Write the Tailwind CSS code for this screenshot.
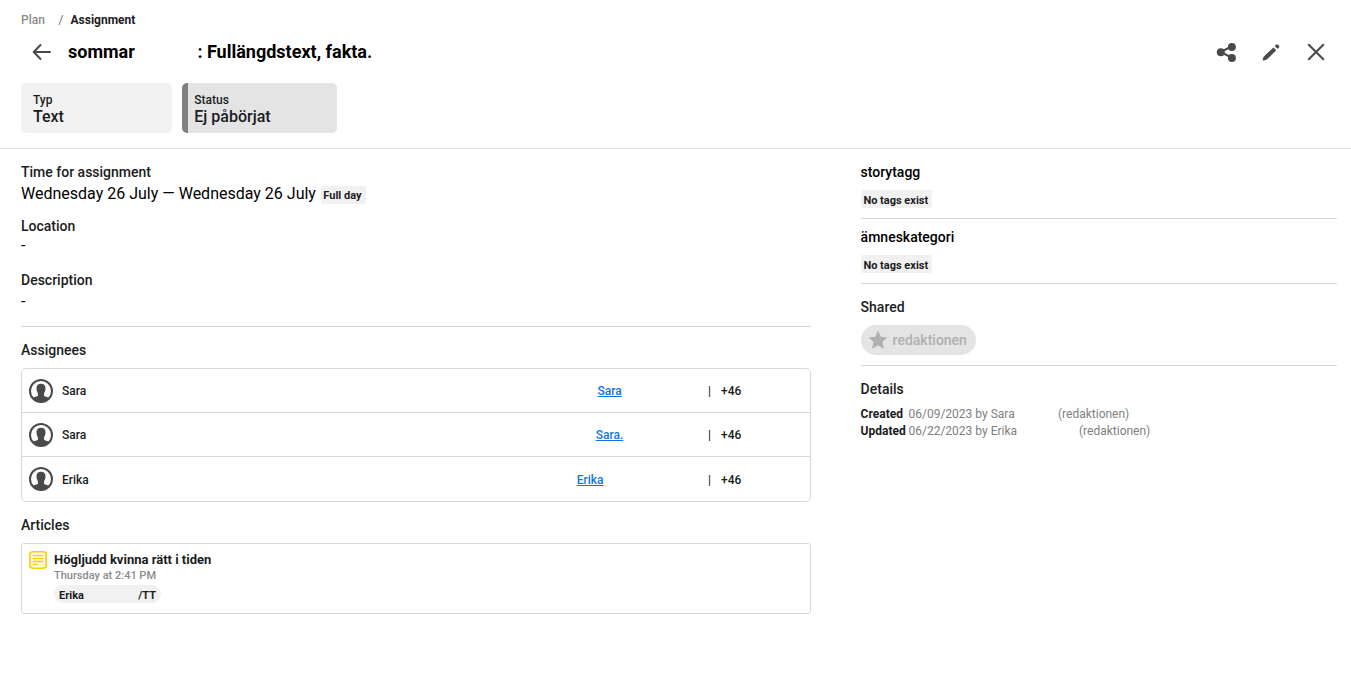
<!DOCTYPE html>
<html lang="sv">
<head>
<meta charset="utf-8">
<title>Assignment</title>
<script src="https://cdn.jsdelivr.net/npm/@tailwindcss/browser@4"></script>
</head>
<body class="h-[679px] overflow-hidden bg-white font-['Roboto',sans-serif] text-[#1b1c1d]">
<svg class="hidden">
  <symbol id="avatar" viewBox="0 0 24 24">
    <circle cx="12" cy="12" r="11" fill="#fff" stroke="#4a4a4a" stroke-width="2"/>
    <path fill="#4a4a4a" d="M12 4.800c3 0 4.700 1.900 4.500 4.800-.1 2-.6 3.600-1.400 4.500v2.600c.3.900 3.200 1.100 5.500 2.100A11 11 0 0 1 12 23a11 11 0 0 1-8.600-4.200c2.300-1 5.200-1.200 5.500-2.100v-2.600c-.8-.9-1.300-2.500-1.400-4.500C7.300 6.700 9 4.800 12 4.800z"/>
  </symbol>
</svg>

<header class="h-[149px] border-b border-[#e0e0e0] pl-[21px]">
  <nav class="flex h-[32px] items-center pt-[7px] text-[12px]">
    <span class="w-[37.500px] font-medium text-[#8b8b8b]">Plan</span>
    <span class="w-[12px] text-[#6b6b6b]">/</span>
    <span class="font-bold">Assignment</span>
  </nav>
  <div class="flex h-[40px] items-center pr-[26px]">
    <svg class="ml-[11px] h-[18px] w-[20px]" viewBox="0 0 20 18" fill="none" stroke="#4a4a4a" stroke-width="2" stroke-linecap="round" stroke-linejoin="round"><path d="M18 9H2M8.500 2L1.700 9l6.800 7"/></svg>
    <h1 class="ml-[16px] flex pb-[2px] text-[18px] font-bold text-black"><span class="w-[129.400px]">sommar</span><span>: Fullängdstext, fakta.</span></h1>
    <div class="ml-auto flex items-center">
      <svg class="h-[20px] w-[20px]" viewBox="0 0 20 20" fill="#4a4a4a"><path d="M15.500 4.500L4.500 10l11 5.500" fill="none" stroke="#4a4a4a" stroke-width="2"/><circle cx="15.900" cy="4.900" r="4"/><circle cx="4.800" cy="10.300" r="4"/><circle cx="15.900" cy="15.900" r="4"/></svg>
      <svg class="ml-[26px] h-[18px] w-[18px]" viewBox="0 0 18 18" fill="#4a4a4a"><path d="M10.900 4.900q.5-.4 1 0l1.900 1.900q.4.500 0 1L5.400 15.900Q4 17.100 1.200 17.600q-.7 0-.6-.7.500-2.500 1.800-3.800z"/><path d="M13.100 2.700l1-1q.9-.9 1.900 0l1 1q.9.900 0 1.900l-1 1q-.4.400-.8 0l-2.100-2.100q-.4-.4 0-.8z"/></svg>
      <svg class="ml-[27px] h-[18px] w-[18px]" viewBox="0 0 18 18" fill="none" stroke="#4a4a4a" stroke-width="2" stroke-linecap="round"><path d="M1.800 1.800l14.500 14.500M16.300 1.800L1.800 16.300"/></svg>
    </div>
  </div>
  <div class="mt-[11px] flex gap-[10px] font-medium">
    <div class="h-[50px] w-[151px] rounded-[5px] bg-[#f2f2f2] pl-[12px] pt-[9px]">
      <div class="text-[12px] leading-[16px]">Typ</div>
      <div class="text-[16px] leading-[18px]">Text</div>
    </div>
    <div class="h-[50px] w-[155px] rounded-[5px] border-l-[6px] border-[#808080] bg-[#e4e4e4] pl-[6.300px] pt-[9px]">
      <div class="text-[12px] leading-[16px]">Status</div>
      <div class="text-[16px] leading-[18px]">Ej påbörjat</div>
    </div>
  </div>
</header>

<main class="flex gap-[49.600px] pl-[21px]">
  <section class="w-[790px] pt-[13px]">
    <h2 class="text-[14px] font-medium leading-[20px]">Time for assignment</h2>
    <div class="flex h-[24px] items-center gap-[4.600px] text-[16px] text-black">
      <span>Wednesday 26 July — Wednesday 26 July</span>
      <span class="mt-[2px] h-[18px] w-[45px] rounded-[2px] bg-[#f1f1f1] pl-[2.800px] text-[11px] font-bold leading-[20px] text-[#1b1c1d]">Full day</span>
    </div>
    <h2 class="mt-[10px] text-[14px] font-medium leading-[20px]">Location</h2>
    <div class="h-[18px] text-[16px] leading-[20px] text-black">-</div>
    <h2 class="mt-[16px] text-[14px] font-medium leading-[20px]">Description</h2>
    <div class="mt-[2px] h-[18px] text-[16px] leading-[20px] text-black">-</div>
    <hr class="mt-[16px] border-[#d8d8d8]">
    <h2 class="mt-[13px] text-[14px] font-medium leading-[20px]">Assignees</h2>
    <ul class="mt-[8px] h-[134px] rounded-[5px] border border-[#d8d8d8] text-[12px] font-medium">
      <li class="flex h-[44px] items-center border-b border-[#d8d8d8] pl-[7px]">
        <svg class="mr-[9px] h-[24px] w-[24px]"><use href="#avatar"/></svg>
        <span class="w-[535.500px]">Sara</span><a class="w-[110.500px] text-[#0f75ea] underline">Sara</a><span class="w-[13px]">|</span><span>+46</span>
      </li>
      <li class="flex h-[44px] items-center border-b border-[#d8d8d8] pl-[7px]">
        <svg class="mr-[9px] h-[24px] w-[24px]"><use href="#avatar"/></svg>
        <span class="w-[533.700px]">Sara</span><a class="w-[112.300px] text-[#0f75ea] underline">Sara.</a><span class="w-[13px]">|</span><span>+46</span>
      </li>
      <li class="flex h-[44px] items-center pl-[7px]">
        <svg class="mr-[9px] h-[24px] w-[24px]"><use href="#avatar"/></svg>
        <span class="w-[514.700px] pt-px">Erika</span><a class="w-[131.300px] pt-px text-[#0f75ea] underline">Erika</a><span class="w-[13px] pt-px">|</span><span class="pt-px">+46</span>
      </li>
    </ul>
    <h2 class="mt-[13px] text-[14px] font-medium leading-[20px]">Articles</h2>
    <article class="mt-[8px] flex h-[71px] rounded-[3px] border border-[#d8d8d8] pl-[7px] pt-[7px]">
      <svg class="h-[18px] w-[18px]" viewBox="0 0 18 18" fill="none" stroke="#fc0" stroke-width="1.600"><rect x=".8" y=".8" width="16.400" height="16.400" rx="3.200" fill="#fff9e0"/><path stroke-width="1.300" stroke-linecap="round" d="M4.300 4.700h9.400M4.300 7.600h9.400M4.300 10.500h9.400M4.300 13.400h4.200"/></svg>
      <div class="ml-[7px]">
        <h3 class="text-[13px] font-bold leading-[18px]">Högljudd kvinna rätt i tiden</h3>
        <p class="text-[11px] font-medium leading-[14px] text-[#8b8b8b]">Thursday at 2:41 PM</p>
        <div class="mt-[2px] flex h-[18px] w-[107px] justify-between rounded-full bg-[#f1f1f1] px-[5px] text-[11px] font-bold leading-[21px]"><span>Erika</span><span>/TT</span></div>
      </div>
    </article>
  </section>

  <aside class="w-[476.400px] pt-[13px]">
    <h2 class="text-[14px] font-medium leading-[20px] text-black">storytagg</h2>
    <div class="mt-[8px] h-[18px] w-[71px] rounded-[2px] bg-[#f1f1f1] pl-[2.800px] text-[11px] font-bold leading-[21px]">No tags exist</div>
    <hr class="mt-[10px] border-[#d8d8d8]">
    <h2 class="mt-[8px] text-[14px] font-medium leading-[20px] text-black">ämneskategori</h2>
    <div class="mt-[8px] h-[18px] w-[71px] rounded-[2px] bg-[#f1f1f1] pl-[2.800px] text-[11px] font-bold leading-[21px]">No tags exist</div>
    <hr class="mt-[10px] border-[#d8d8d8]">
    <h2 class="mt-[13px] text-[14px] font-medium leading-[20px]">Shared</h2>
    <div class="mt-[8px] flex h-[30px] w-[115px] items-center rounded-full bg-[#e4e4e4] pl-[8px] text-[14px] font-medium text-[#b0b0b0]">
      <svg class="mr-[6px] h-[18px] w-[18px]" viewBox="0 0 18 18" fill="#b0b0b0" stroke="#b0b0b0" stroke-linejoin="round"><path d="M9 .6l2.500 5.700 6 .5-4.600 4 1.500 6.300L9 13.800l-5.400 3.300 1.500-6.300-4.600-4 6-.5z"/></svg>
      <span>redaktionen</span>
    </div>
    <hr class="mt-[10px] border-[#d8d8d8]">
    <h2 class="mt-[13px] text-[14px] font-medium leading-[20px]">Details</h2>
    <div class="mt-[7px] text-[12px] leading-[17px] text-[#808080]">
      <div class="flex"><b class="w-[47.900px] text-[#1b1c1d]">Created</b><span class="w-[149.500px]">06/09/2023 by Sara</span><span>(redaktionen)</span></div>
      <div class="flex"><b class="w-[47.900px] text-[#1b1c1d]">Updated</b><span class="w-[170.500px]">06/22/2023 by Erika</span><span>(redaktionen)</span></div>
    </div>
  </aside>
</main>
</body>
</html>
